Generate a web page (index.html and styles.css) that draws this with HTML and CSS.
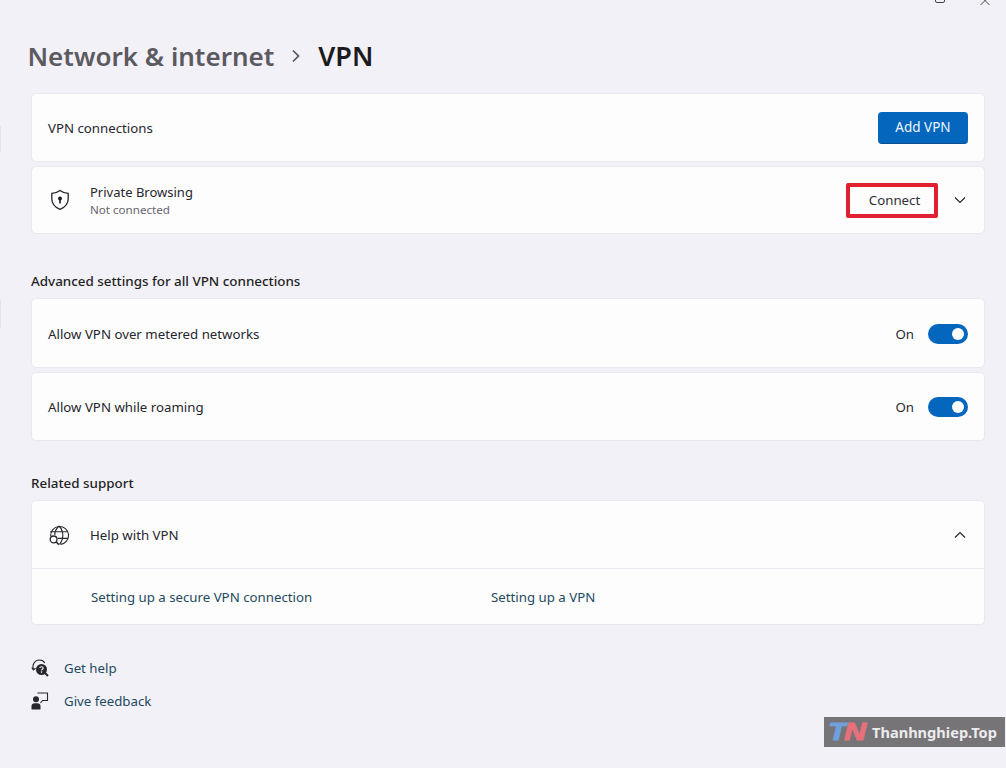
FILE: index.html
```html
<!DOCTYPE html>
<html lang="en">
<head>
<meta charset="utf-8">
<title>VPN</title>
<link rel="stylesheet" href="styles.css">
</head>
<body>
<div class="window-controls">
  <span class="ctl-max"></span>
  <svg class="ctl-close" width="12" height="6" viewBox="0 0 12 6"><path d="M1.5 -4 L10.5 5 M10.5 -4 L1.5 5" fill="none" stroke="#444" stroke-width="1"/></svg>
</div>
<span class="nav-mark nav-mark-a"></span>
<span class="nav-mark nav-mark-b"></span>
<main class="page">
  <h1 class="crumbs">
    <span class="crumb-parent">Network &amp; internet</span>
    <svg class="crumb-sep" width="12" height="14" viewBox="0 0 12 14"><path d="M3 1.5 L8.5 7 L3 12.5" fill="none" stroke="#55545a" stroke-width="1.7"/></svg>
    <span class="crumb-current">VPN</span>
  </h1>

  <section class="stack">
    <div class="card row first-row">
      <span class="label">VPN connections</span>
      <button class="btn-primary">Add VPN</button>
    </div>
    <div class="card row">
      <svg class="row-icon shield" width="20" height="22" viewBox="0 0 20 22">
        <path d="M10 1.4 C12.6 3.4 15.2 4.2 18.2 4.3 V10 C18.2 14.8 15.2 18.2 10 20.4 C4.8 18.2 1.8 14.8 1.8 10 V4.3 C4.8 4.2 7.4 3.4 10 1.4 Z" fill="none" stroke="#26262c" stroke-width="1.3"/>
        <circle cx="10" cy="9.6" r="2" fill="#1b1b20"/>
        <rect x="9.2" y="10" width="1.6" height="4.4" fill="#1b1b20"/>
      </svg>
      <div class="titles">
        <span class="label">Private Browsing</span>
        <span class="sub">Not connected</span>
      </div>
      <div class="actions">
        <button class="btn-connect">Connect</button>
        <svg class="chev" width="14" height="14" viewBox="0 0 14 14"><path d="M2 4.5 L7 9.5 L12 4.5" fill="none" stroke="#26262c" stroke-width="1.2"/></svg>
      </div>
    </div>
  </section>

  <h2 class="section-title first">Advanced settings for all VPN connections</h2>
  <section class="stack">
    <div class="card row tall tall-first">
      <span class="label">Allow VPN over metered networks</span>
      <div class="toggle-wrap"><span class="state">On</span><span class="toggle"><span class="knob"></span></span></div>
    </div>
    <div class="card row tall">
      <span class="label">Allow VPN while roaming</span>
      <div class="toggle-wrap"><span class="state">On</span><span class="toggle"><span class="knob"></span></span></div>
    </div>
  </section>

  <h2 class="section-title">Related support</h2>
  <section class="card">
    <div class="row help-head">
      <svg class="row-icon globe" width="22" height="22" viewBox="0 0 22 22" fill="none" stroke="#26262c" stroke-width="1.1">
        <path d="M2.6 12 A9 9 0 1 1 12.5 20.4"/>
        <path d="M2.2 7.8 H20 M10 14.4 H20 M11 2 C7.5 5.5 6.6 8.5 6.8 11 M11 2 C16 7 16 15 11.5 20.4"/>
        <circle cx="5.6" cy="15.4" r="3.4" fill="#fdfdfe" stroke-width="1.3"/>
        <path d="M8 17.8 L10.8 20.6" stroke-width="1.5"/>
      </svg>
      <span class="label">Help with VPN</span>
      <svg class="chev chev-end" width="14" height="14" viewBox="0 0 14 14"><path d="M2 9.5 L7 4.5 L12 9.5" fill="none" stroke="#26262c" stroke-width="1.2"/></svg>
    </div>
    <div class="help-links">
      <a class="link link-a">Setting up a secure VPN connection</a>
      <a class="link">Setting up a VPN</a>
    </div>
  </section>

  <nav class="footer-links">
    <a class="foot">
      <svg width="18" height="18" viewBox="0 0 18 18">
        <path d="M2.4 10.5 C0.8 5 4 1 8.4 1 C11 1 12.8 2.2 13.8 4" fill="none" stroke="#26262c" stroke-width="1.1"/>
        <path d="M0.8 8.5 L2.4 11 L4.6 9.2" fill="none" stroke="#26262c" stroke-width="1.1"/>
        <circle cx="10.5" cy="10.5" r="5.5" fill="#26262c"/>
        <path d="M14 14 L17 17" stroke="#26262c" stroke-width="2"/>
        <path d="M8.8 9 C8.9 7.3 12.1 7.3 12.2 9 C12.2 10.3 10.5 10.1 10.5 11.5" fill="none" stroke="#f3f1f8" stroke-width="1.1"/>
        <circle cx="10.5" cy="13.1" r=".8" fill="#f3f1f8"/>
      </svg>
      <span>Get help</span>
    </a>
    <a class="foot">
      <svg width="18" height="18" viewBox="0 0 18 18">
        <circle cx="5" cy="7.2" r="3" fill="#26262c"/>
        <path d="M0.5 17.5 V14 C0.5 12 2 11.2 3.5 11.2 H6.5 C8 11.2 9.5 12 9.5 14 V17.5 Z" fill="#26262c"/>
        <path d="M6.5 1 H16.5 V8.5 H11.5 L9.5 11" fill="none" stroke="#26262c" stroke-width="1.1"/>
      </svg>
      <span>Give feedback</span>
    </a>
  </nav>
</main>
<div class="watermark"><span class="wm-logo"><span class="wm-t">T</span><span class="wm-n">N</span></span><span class="wm-text">Thanhnghiep.Top</span></div>
</body>
</html>
```
FILE: styles.css
```css
* { box-sizing: border-box; }
html, body { margin: 0; height: 768px; overflow: hidden; }
body {
  background: #f3f1f8;
  font-family: "Noto Sans", "Open Sans", "Liberation Sans", sans-serif;
  color: #1f1f24;
  position: relative;
}
.page { padding: 35px 21px 0 31px; display: flex; flex-direction: column; }
.crumbs { margin: 0 0 16px -3.5px; height: 42px; display: flex; align-items: center; font-size: 26px; font-weight: 600; line-height: 42px; }
.crumb-parent { color: #5b5a60; }
.crumb-sep { margin: 0 16px 0 16px; }
.crumb-current { color: #1b1b20; font-size: 27px; }
.stack { display: flex; flex-direction: column; gap: 4px; }
.card { background: #fdfdfe; border: 1px solid #ebe9ef; border-radius: 5px; }
.row { display: flex; align-items: center; min-height: 68px; padding: 0 16px; }
.row.first-row { min-height: 69px; }
.row.tall { min-height: 69px; }
.row.tall-first { min-height: 70px; padding-top: 1px; }
.label { font-size: 13.25px; line-height: 18px; color: #26262b; }
.btn-primary { margin-left: auto; width: 90px; height: 32px; border: 0; border-bottom: 1px solid #0b4f91; border-radius: 4px; background: #0566bd; color: #eef6fd; font: inherit; font-size: 13.5px; }
.row-icon { flex: none; }
.shield { margin: 0 20px 0 2px; }
.globe { margin: 0 20px 0 0; }
.titles { display: flex; flex-direction: column; margin-top: 2px; }
.titles .label { font-size: 13px; }
.sub { font-size: 11.6px; line-height: 18px; color: #66656b; }
.actions { margin-left: auto; display: flex; align-items: center; gap: 15px; margin-right: 1px; }
.btn-connect { width: 92px; height: 35px; background: #fdfdfe; border: 4px solid #e0202c; border-radius: 2px; color: #303036; font: inherit; font-size: 13.25px; padding: 0 0 0 5px; }
.section-title { margin: 33px 0 8px; font-size: 13.4px; line-height: 18px; font-weight: 500; color: #1f1f24; }
.section-title.first { margin: 38px 0 8px; }
.toggle-wrap { margin-left: auto; display: flex; align-items: center; gap: 14px; }
.state { font-size: 13.25px; color: #2a2a30; }
.toggle { width: 40px; height: 20px; border-radius: 10px; background: #0566bd; display: flex; align-items: center; justify-content: flex-end; padding-right: 4px; }
.knob { width: 12px; height: 12px; border-radius: 50%; background: #fff; }
.help-head { border-bottom: 1px solid #ebe9ef; min-height: 68px; padding-top: 1px; }
.chev-end { margin-left: auto; margin-right: 1px; }
.help-links { display: flex; height: 55px; align-items: center; padding-left: 59px; }
.link { font-size: 13.25px; color: #1d4a5e; }
.link-a { width: 400px; }
.footer-links { margin-top: 34px; display: flex; flex-direction: column; gap: 15px; }
.foot { display: flex; align-items: center; gap: 15px; height: 18px; font-size: 13.25px; color: #1d4a5e; }
.watermark { position: absolute; left: 824px; top: 717px; width: 181px; height: 30px; background: #767476; display: flex; align-items: center; padding-left: 4px; }
.wm-logo { width: 43px; flex: none; font-family: "Liberation Sans", sans-serif; font-size: 24px; font-weight: 700; font-style: italic; letter-spacing: -2px; line-height: 30px; display: flex; justify-content: center; transform: scaleX(1.25); transform-origin: 36px 50%; }
.wm-t { color: #6fa0dc; -webkit-text-stroke: 1.2px #6fa0dc; }
.wm-n { color: #e8707c; -webkit-text-stroke: 1.2px #e8707c; }
.wm-text { font-size: 14.6px; font-weight: 700; color: #ecebee; margin-left: 1px; }
.window-controls span, .ctl-close { position: absolute; }
.ctl-max { left: 935px; top: -6px; width: 10px; height: 9px; border: 1px solid #444; border-radius: 2px; }
.ctl-close { left: 979px; top: 0; }
.nav-mark { position: absolute; left: 0; width: 1px; background: #e4e2e8; }
.nav-mark-a { top: 126px; height: 26px; }
.nav-mark-b { top: 300px; height: 28px; }
```
